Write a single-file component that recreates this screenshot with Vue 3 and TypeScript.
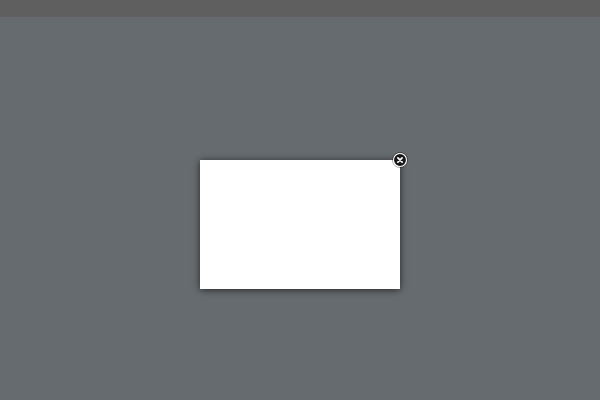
<script setup lang="ts">
</script>

<template>
  <div class="page">
    <div class="topbar"></div>
    <div class="stage">
      <div class="modal">
        <button class="close" type="button" aria-label="Close">
          <svg viewBox="0 0 16 16" width="16" height="16" aria-hidden="true">
            <circle cx="8" cy="8" r="7.6" fill="none" stroke="#000000" stroke-opacity="0.4" stroke-width="0.8" />
            <circle cx="8" cy="8" r="6.5" fill="#161616" stroke="#ffffff" stroke-width="1.1" />
            <path d="M5.9 5.9 L10.1 10.1 M10.1 5.9 L5.9 10.1" stroke="#ffffff" stroke-width="1.8" stroke-linecap="round" fill="none" />
          </svg>
        </button>
      </div>
    </div>
  </div>
</template>

<style scoped>
.page {
  width: 600px;
  height: 400px;
  display: flex;
  flex-direction: column;
  background-color: #666b6e;
  background-image: repeating-conic-gradient(#63686c 0 25%, #696e71 0 50%);
  background-size: 2px 2px;
  overflow: hidden;
}
.topbar {
  height: 17px;
  flex: none;
  background-color: #5f5f5f;
  background-image: repeating-conic-gradient(#5c5c5c 0 25%, #626262 0 50%);
  background-size: 2px 2px;
}
.stage {
  flex: 1;
  display: flex;
  justify-content: center;
  padding-top: 143px;
}
.modal {
  position: relative;
  width: 200px;
  height: 129px;
  background: #ffffff;
  box-shadow: 0 1px 7px rgba(0, 0, 0, 0.65);
}
.close {
  position: absolute;
  top: -8px;
  right: -8px;
  width: 16px;
  height: 16px;
  padding: 0;
  border: 0;
  background: none;
  display: block;
}
.close svg {
  display: block;
}
</style>
<style>
html, body {
  margin: 0;
  background: #666b6e;
}
</style>
